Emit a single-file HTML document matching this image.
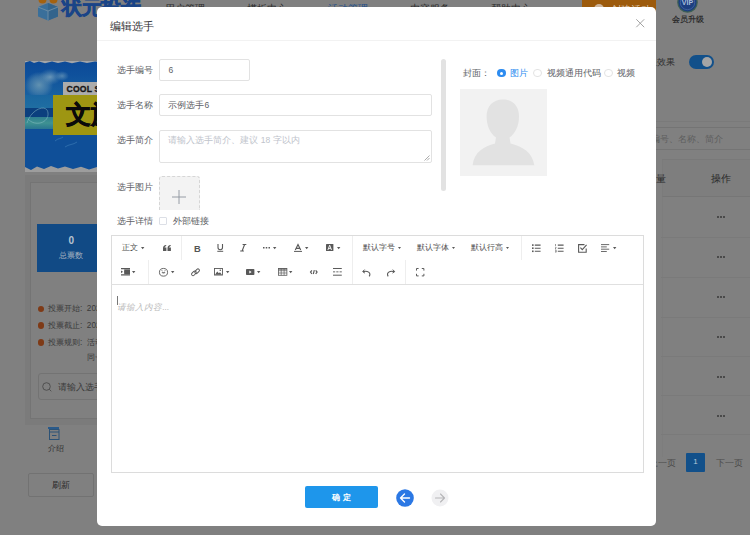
<!DOCTYPE html>
<html><head><meta charset="utf-8">
<style>
*{box-sizing:border-box;margin:0;padding:0}
html,body{width:750px;height:535px;overflow:hidden;background:#fff;font-family:"Liberation Sans",sans-serif;}
.a{position:absolute;white-space:nowrap}
#page{position:absolute;left:0;top:0;width:750px;height:535px;background:#808080}
#ov{position:absolute;left:0;top:0;width:750px;height:535px;background:rgba(0,0,0,0.5)}
#modal{position:absolute;left:97.4px;top:7.3px;width:558.3px;height:519.1px;background:#fff;border-radius:5px}
.lbl{position:absolute;font-size:8.5px;color:#606266;line-height:10px}
.inp{position:absolute;border:1px solid #e2e2e2;border-radius:2px;background:#fff}
.tb{position:absolute;font-size:8px;color:#595959;line-height:10px}
.car{position:absolute;width:0;height:0;border-left:2px solid transparent;border-right:2px solid transparent;border-top:2.5px solid #595959}
.sep{position:absolute;width:1px;background:#eee}
svg{position:absolute;overflow:visible}
</style></head><body>
<div id="page">
  <!-- header -->
  <svg style="left:37px;top:-3px" width="22" height="24" viewBox="0 0 22 24">
    <path d="M11 6 L21 10 L21 19.5 L11 23.5 L1 19.5 L1 10 Z" fill="#3a6f9a"/>
    <path d="M11 6 L21 10 L21 19.5 L11 23.5 Z" fill="#33648c"/>
    <path d="M11 14 L11 23.5 M1 10 L11 14 L21 10" stroke="#6f8ea6" stroke-width="0.9" fill="none"/>
    <circle cx="5.5" cy="2.5" r="4" fill="#a4620f"/><circle cx="16.5" cy="2.5" r="4" fill="#a4620f"/>
  </svg>
  <div class="a" style="left:62px;top:-4px;font-size:20px;line-height:22px;font-weight:700;color:#1a4487;letter-spacing:-0.5px;-webkit-text-stroke:0.7px #1a4487">状元投选</div>
  <div class="a" style="left:165px;top:4px;font-size:9.5px;line-height:9.5px;color:#2a2a2a">用户管理</div>
  <div class="a" style="left:247px;top:4px;font-size:9.5px;line-height:9.5px;color:#2a2a2a">模板中心</div>
  <div class="a" style="left:328px;top:4px;font-size:9.5px;line-height:9.5px;color:#1f4f8a">活动管理</div>
  <div class="a" style="left:410px;top:4px;font-size:9.5px;line-height:9.5px;color:#2a2a2a">内容服务</div>
  <div class="a" style="left:491px;top:4px;font-size:9.5px;line-height:9.5px;color:#2a2a2a">帮助中心</div>
  <div class="a" style="left:582px;top:-10px;width:74px;height:30px;background:#9c5a0c;border-radius:3px"></div>
  <div class="a" style="left:594px;top:4px;width:10px;height:10px;border-radius:50%;background:#cdb59c"></div>
  <div class="a" style="left:611px;top:4.5px;font-size:9.5px;line-height:9.5px;color:#dcc8b0">创建活动</div>
  <svg style="left:677px;top:-8.5px" width="21" height="21" viewBox="0 0 21 21"><circle cx="10.5" cy="10.5" r="10.3" fill="#3d5f55"/><circle cx="10.5" cy="10.5" r="9" fill="#1c3f80"/><circle cx="10.5" cy="10.5" r="7.2" fill="none" stroke="#5f7fb0" stroke-width="0.5"/><text x="10.5" y="13" font-size="7" fill="#a9bedc" text-anchor="middle" font-weight="bold" font-family="Liberation Sans">VIP</text></svg>
  <div class="a" style="left:672px;top:15px;font-size:8.3px;line-height:9px;color:#222;-webkit-text-stroke:0.15px #222">会员升级</div>

  <!-- banner -->
  <div class="a" style="left:25px;top:61px;width:80px;height:111px;overflow:hidden;background:#0e4d96">
    <div class="a" style="left:0;top:0;width:80px;height:36px;background:linear-gradient(#0c4a98 0%,#0f519c 40%,#1a62a0 100%)"></div>
    <div class="a" style="left:0;top:11px;width:28px;height:26px;background:radial-gradient(ellipse at 50% 50%,rgba(110,155,180,0.85) 0%,rgba(90,140,175,0.5) 45%,rgba(60,120,170,0) 72%)"></div>
    <div class="a" style="left:14px;top:8px;width:22px;height:16px;background:radial-gradient(ellipse at 50% 50%,rgba(125,165,190,0.8) 0%,rgba(90,140,175,0.3) 50%,rgba(60,120,170,0) 72%)"></div>
    <div class="a" style="left:30px;top:10px;width:14px;height:10px;background:radial-gradient(ellipse at 50% 50%,rgba(110,155,185,0.7) 0%,rgba(60,120,170,0) 70%)"></div>
    <div class="a" style="left:0;top:34px;width:80px;height:13px;background:linear-gradient(#1a66a0,#1f6ea2)"></div>
    <div class="a" style="left:0;top:47px;width:80px;height:9px;background:#0b3f7e"></div>
    <div class="a" style="left:0;top:56px;width:80px;height:12px;background:linear-gradient(#2f7f90,#3f9292 50%,#2a7690)"></div>
    <div class="a" style="left:0;top:68px;width:80px;height:40px;background:#0f4f98"></div>
    <svg style="left:0;top:0" width="80" height="111" viewBox="0 0 80 111">
      <path d="M0 1.5 L5 0 L9 2 L14 0.5 L20 2.2 L27 0.4 L33 2 L40 0.5 L47 2.2 L55 0.6 L62 2 L70 0.5 L80 1.8 L80 -2 L0 -2Z" fill="#a3a5a8"/>
      <path d="M0 106 L6 109 L12 105.5 L19 108 L26 105 L33 107.5 L40 105.5 L48 108 L56 105.8 L64 108.5 L72 106 L80 107.5 L80 112 L0 112Z" fill="#9d9d9d"/>
      <path d="M2 62 C6 48 22 42 23 52 C24 62 10 66 3 58" stroke="#8fc0c8" stroke-width="0.5" fill="none"/>
      <path d="M30 80 C33 77 36 78 38 76 M40 86 C44 83 48 84 52 81" stroke="#3f7fb8" stroke-width="0.6" fill="none"/>
    </svg>
    <div class="a" style="left:38px;top:21px;width:45px;height:12.5px;background:#acacac"></div>
    <div class="a" style="left:41.5px;top:22px;font-size:8.6px;line-height:12px;font-weight:bold;color:#151515;letter-spacing:0.2px;-webkit-text-stroke:0.3px #151515">COOL S</div>
    <div class="a" style="left:28px;top:34px;width:60px;height:40px;background:#9e9612"></div>
    <div class="a" style="left:41px;top:36px;font-size:25px;line-height:34px;font-weight:700;color:#0a0a0a;-webkit-text-stroke:0.6px #0a0a0a">文旅</div>
  </div>
  <!-- left panel -->
  <div class="a" style="left:25px;top:175px;width:80px;height:250px;background:#7b7b7b"></div>
  <div class="a" style="left:30px;top:182px;width:80px;height:237px;background:#808080;border:1px solid #747474"></div>
  <div class="a" style="left:37px;top:224px;width:70px;height:48px;background:#114a85"></div>
  <div class="a" style="left:68.5px;top:235px;font-size:10px;line-height:11px;color:#b8c4d0;font-weight:bold">0</div>
  <div class="a" style="left:59px;top:251px;font-size:8px;line-height:10px;color:#aab6c2">总票数</div>
  <div class="a" style="left:37.5px;top:305.5px;width:6.5px;height:6.5px;border-radius:50%;background:#7e3a16"></div>
  <div class="a" style="left:37.5px;top:322px;width:6.5px;height:6.5px;border-radius:50%;background:#7e3a16"></div>
  <div class="a" style="left:37.5px;top:339px;width:6.5px;height:6.5px;border-radius:50%;background:#7e3a16"></div>
  <div class="a" style="left:48px;top:304px;font-size:8.2px;line-height:10px;color:#3a3a3a">投票开始:&nbsp; 2023</div>
  <div class="a" style="left:48px;top:321px;font-size:8.2px;line-height:10px;color:#3a3a3a">投票截止:&nbsp; 2023</div>
  <div class="a" style="left:48px;top:338px;font-size:8.2px;line-height:10px;color:#3a3a3a">投票规则:&nbsp; 活动</div>
  <div class="a" style="left:87px;top:352.5px;font-size:8.2px;line-height:10px;color:#3a3a3a">同一</div>
  <div class="a" style="left:38px;top:373px;width:70px;height:27px;background:#808080;border:1px solid #737373;border-radius:3px"></div>
  <svg style="left:42px;top:382px" width="10" height="10" viewBox="0 0 10 10"><circle cx="4.5" cy="4.5" r="3.8" fill="none" stroke="#444" stroke-width="0.8"/><path d="M7.3 7.3L9.3 9.3" stroke="#444" stroke-width="0.8"/></svg>
  <div class="a" style="left:57.5px;top:382px;font-size:8.5px;line-height:10px;color:#3a3a3a">请输入选手</div>
  <div class="a" style="left:48px;top:427px;width:11px;height:1.5px;background:#2a5a8a"></div>
  <svg style="left:48.5px;top:429px" width="10.5" height="11" viewBox="0 0 10.5 11"><rect x="0.5" y="0.5" width="9.5" height="10" fill="none" stroke="#2c5276" stroke-width="1"/><path d="M0.5 3H10M3 6.5H7.5" stroke="#2c5276" stroke-width="1"/></svg>
  <div class="a" style="left:48px;top:443.5px;font-size:7.5px;line-height:9px;color:#303030">介绍</div>
  <div class="a" style="left:28px;top:473px;width:66px;height:24px;border:1px solid #727272;border-radius:2px;background:#808080"></div>
  <div class="a" style="left:52px;top:480px;font-size:8.5px;line-height:10px;color:#2a2a2a">刷新</div>

  <!-- right side -->
  <div class="a" style="left:648px;top:57px;font-size:8.5px;line-height:10px;color:#2e2e2e">显效果</div>
  <div class="a" style="left:689px;top:55px;width:25px;height:13.5px;border-radius:7px;background:#12508a"></div>
  <div class="a" style="left:701.5px;top:56.5px;width:10.5px;height:10.5px;border-radius:50%;background:#a5a5a5"></div>
  <div class="a" style="left:640px;top:121px;width:110px;height:1px;background:#7a7a7a"></div>
  <div class="a" style="left:620px;top:127px;width:140px;height:22.5px;border:1px solid #747474;background:#808080"></div>
  <div class="a" style="left:651px;top:134px;font-size:8.5px;line-height:10px;color:#5e5e5e">编号、名称、简介</div>
  <div class="a" style="left:662px;top:159px;width:100px;height:38px;background:#7e7e7e;border-top:1px solid #797979;border-left:1px solid #7b7b7b;border-bottom:1px solid #767676"></div><div class="a" style="left:662px;top:197px;width:1px;height:260px;background:#7d7d7d"></div>
  <div class="a" style="left:646px;top:173px;font-size:10px;line-height:11px;color:#2a2a2a">数量</div>
  <div class="a" style="left:711px;top:173px;font-size:10px;line-height:11px;color:#2a2a2a">操作</div>
  <div class="a" style="left:661px;top:237px;width:100px;height:1px;background:#7a7a7a"></div>
<div class="a" style="left:716.6px;top:215.7px;width:2px;height:2px;border-radius:50%;background:#383838"></div><div class="a" style="left:719.9px;top:215.7px;width:2px;height:2px;border-radius:50%;background:#383838"></div><div class="a" style="left:723.2px;top:215.7px;width:2px;height:2px;border-radius:50%;background:#383838"></div>
<div class="a" style="left:661px;top:277px;width:100px;height:1px;background:#7a7a7a"></div>
<div class="a" style="left:716.6px;top:255.7px;width:2px;height:2px;border-radius:50%;background:#383838"></div><div class="a" style="left:719.9px;top:255.7px;width:2px;height:2px;border-radius:50%;background:#383838"></div><div class="a" style="left:723.2px;top:255.7px;width:2px;height:2px;border-radius:50%;background:#383838"></div>
<div class="a" style="left:661px;top:316.5px;width:100px;height:1px;background:#7a7a7a"></div>
<div class="a" style="left:716.6px;top:295.7px;width:2px;height:2px;border-radius:50%;background:#383838"></div><div class="a" style="left:719.9px;top:295.7px;width:2px;height:2px;border-radius:50%;background:#383838"></div><div class="a" style="left:723.2px;top:295.7px;width:2px;height:2px;border-radius:50%;background:#383838"></div>
<div class="a" style="left:661px;top:356px;width:100px;height:1px;background:#7a7a7a"></div>
<div class="a" style="left:716.6px;top:335.7px;width:2px;height:2px;border-radius:50%;background:#383838"></div><div class="a" style="left:719.9px;top:335.7px;width:2px;height:2px;border-radius:50%;background:#383838"></div><div class="a" style="left:723.2px;top:335.7px;width:2px;height:2px;border-radius:50%;background:#383838"></div>
<div class="a" style="left:661px;top:395px;width:100px;height:1px;background:#7a7a7a"></div>
<div class="a" style="left:716.6px;top:375.7px;width:2px;height:2px;border-radius:50%;background:#383838"></div><div class="a" style="left:719.9px;top:375.7px;width:2px;height:2px;border-radius:50%;background:#383838"></div><div class="a" style="left:723.2px;top:375.7px;width:2px;height:2px;border-radius:50%;background:#383838"></div>
<div class="a" style="left:661px;top:434px;width:100px;height:1px;background:#7a7a7a"></div>
<div class="a" style="left:716.6px;top:414.7px;width:2px;height:2px;border-radius:50%;background:#383838"></div><div class="a" style="left:719.9px;top:414.7px;width:2px;height:2px;border-radius:50%;background:#383838"></div><div class="a" style="left:723.2px;top:414.7px;width:2px;height:2px;border-radius:50%;background:#383838"></div>

  <div class="a" style="left:649px;top:457.5px;font-size:8.5px;line-height:10px;color:#4a4a4a">上一页</div>
  <div class="a" style="left:686px;top:453px;width:19px;height:18.5px;background:#12508a;border-radius:1px;color:#b8c8d8;font-size:8px;line-height:18.5px;text-align:center">1</div>
  <div class="a" style="left:716px;top:457.5px;font-size:8.5px;line-height:10px;color:#4a4a4a">下一页</div>
</div>
<div id="modal">
  <div class="a" style="left:13px;top:12px;font-size:10.7px;color:#303133;line-height:14px">编辑选手</div>
  <svg style="left:538.5px;top:11.5px" width="8.5" height="8.5" viewBox="0 0 8.5 8.5"><path d="M0.3 0.3L8.2 8.2M8.2 0.3L0.3 8.2" stroke="#999" stroke-width="0.9"/></svg>
  <div class="a" style="left:0;top:33px;width:559px;height:1px;background:#f2f2f2"></div>

  <div class="lbl" style="left:20px;top:58px">选手编号</div>
  <div class="inp" style="left:62px;top:52px;width:91px;height:22px"></div>
  <div class="a" style="left:71px;top:58px;font-size:8.5px;color:#606266;line-height:10px">6</div>

  <div class="lbl" style="left:20px;top:93px">选手名称</div>
  <div class="inp" style="left:62px;top:87px;width:273px;height:22px"></div>
  <div class="a" style="left:71px;top:93px;font-size:8.5px;color:#606266;line-height:10px">示例选手6</div>

  <div class="lbl" style="left:20px;top:128px">选手简介</div>
  <div class="inp" style="left:62px;top:123px;width:273px;height:33px"></div>
  <div class="a" style="left:71px;top:128px;font-size:8.5px;color:#c0c4cc;line-height:10px">请输入选手简介、建议 18 字以内</div>
  <svg style="left:327px;top:148px" width="6" height="6" viewBox="0 0 6 6"><path d="M5.5 0.5L0.5 5.5M5.5 3L3 5.5" stroke="#888" stroke-width="0.7"/></svg>

  <div class="lbl" style="left:20px;top:175px">选手图片</div>
  <div class="a" style="left:62px;top:169px;width:41px;height:34px;border:1px dashed #d6d6d6;border-bottom:none;border-radius:3px 3px 0 0;background:#f3f3f3"></div>
  <svg style="left:75px;top:183px" width="14" height="14" viewBox="0 0 14 14"><path d="M7 0V14M0 7H14" stroke="#8c939d" stroke-width="0.9"/></svg>

  <div class="lbl" style="left:20px;top:209px">选手详情</div>
  <div class="a" style="left:62px;top:210px;width:8px;height:8px;border:1px solid #dcdfe6;border-radius:1px;background:#fff"></div>
  <div class="a" style="left:76px;top:209px;font-size:8.5px;color:#606266;line-height:10px">外部链接</div>

  <div class="a" style="left:344px;top:51.5px;width:4.5px;height:132px;border-radius:3px;background:#e2e2e2"></div>

  <div class="a" style="left:366px;top:61px;font-size:8.5px;color:#606266;line-height:10px">封面：</div>
  <div class="a" style="left:400px;top:61.5px;width:8.5px;height:8.5px;border-radius:50%;background:#2d8cf0"></div>
  <div class="a" style="left:402.75px;top:64.25px;width:3px;height:3px;border-radius:50%;background:#fff"></div>
  <div class="a" style="left:413px;top:61px;font-size:8.5px;color:#2d8cf0;line-height:10px">图片</div>
  <div class="a" style="left:436px;top:61.5px;width:8.5px;height:8.5px;border-radius:50%;border:1px solid #e3e3e3;background:#fff"></div>
  <div class="a" style="left:449.5px;top:61px;font-size:8.5px;color:#606266;line-height:10px">视频通用代码</div>
  <div class="a" style="left:507px;top:61.5px;width:8.5px;height:8.5px;border-radius:50%;border:1px solid #e3e3e3;background:#fff"></div>
  <div class="a" style="left:519.5px;top:61px;font-size:8.5px;color:#606266;line-height:10px">视频</div>

  <div class="a" style="left:363px;top:82px;width:87px;height:87px;background:#f2f2f2;overflow:hidden">
    <svg style="left:0;top:0" width="87" height="87" viewBox="0 0 87 87">
      <path d="M42.75 10.4 C52.5 10.4 59 17 59 27.5 C59 37 55 45 49.5 48.5 L50.5 54.5 C62 57.5 72.5 63 74.3 76.3 L12.6 76.3 C14 63 24 57.5 35 54.5 L36 48.5 C30.5 45 26.6 37 26.6 27.5 C26.6 17 33 10.4 42.75 10.4Z" fill="#e2e2e2"/>
    </svg>
  </div>

  <!-- editor -->
  <div class="a" style="left:13.5px;top:228px;width:533px;height:238px;border:1px solid #dcdcdc"></div>
  <div class="a" style="left:14px;top:276.5px;width:532px;height:1px;background:#e0e0e0"></div>
  <div class="a" style="left:-97px;top:-7px;width:750px;height:535px"><div class="a" style="left:121.5px;top:243px;font-size:8px;line-height:10px;color:#4d4d4d">正文</div>
<svg style="left:140.60px;top:246.30px" width="3.4" height="2.2" viewBox="0 0 3.4 2.2"><path d="M0 0H3.4L1.7 2.2Z" fill="#595959"/></svg>
<svg style="left:163px;top:244.8px" width="8" height="6" viewBox="0 0 8 6"><path d="M0 6V3.2C0 1.3 1 .3 3.2 0V1.1C2.2 1.4 1.7 2 1.6 2.6H3.4V6ZM4.5 6V3.2C4.5 1.3 5.5 .3 7.7 0V1.1C6.7 1.4 6.2 2 6.1 2.6H7.9V6Z" fill="#595959"/></svg>
<div class="a" style="left:181px;top:236px;width:1px;height:24px;background:#eeeeee"></div>
<div class="a" style="left:193.5px;top:243.5px;font-size:9.3px;line-height:10px;font-weight:bold;color:#555">B</div>
<svg style="left:217px;top:244px" width="6.5" height="8" viewBox="0 0 6.5 8"><path d="M1 0V3.6C1 5 2 5.8 3.25 5.8S5.5 5 5.5 3.6V0" stroke="#595959" stroke-width="1.1" fill="none"/><path d="M0.3 7.3H6.2" stroke="#595959" stroke-width="1"/></svg>
<svg style="left:239.7px;top:244px" width="6.5" height="7.5" viewBox="0 0 6.5 7.5"><path d="M2.6 .5H6.3M0.2 7H3.9M4.6 .5L2.1 7" stroke="#595959" stroke-width="1.1" fill="none"/></svg>
<svg style="left:262.6px;top:246.8px" width="7" height="1.6" viewBox="0 0 7 1.6"><rect x="0" y="0" width="1.5" height="1.5" fill="#595959"/><rect x="2.75" y="0" width="1.5" height="1.5" fill="#595959"/><rect x="5.5" y="0" width="1.5" height="1.5" fill="#595959"/></svg>
<svg style="left:273.10px;top:246.30px" width="3.4" height="2.2" viewBox="0 0 3.4 2.2"><path d="M0 0H3.4L1.7 2.2Z" fill="#595959"/></svg>
<svg style="left:294px;top:243.8px" width="8" height="8" viewBox="0 0 8 8"><path d="M1.3 6.1L4 0.5L6.7 6.1M2.3 4.3H5.7" stroke="#595959" stroke-width="1.15" fill="none"/><path d="M0 7.4H8" stroke="#595959" stroke-width="1"/></svg>
<svg style="left:304.70px;top:246.30px" width="3.4" height="2.2" viewBox="0 0 3.4 2.2"><path d="M0 0H3.4L1.7 2.2Z" fill="#595959"/></svg>
<svg style="left:325.8px;top:244px" width="7.4" height="7" viewBox="0 0 7.4 7"><rect width="7.4" height="7" rx="0.6" fill="#595959"/><path d="M1.9 6L3.7 1.2L5.5 6M2.6 4.4H4.8" stroke="#fff" stroke-width="0.9" fill="none"/></svg>
<svg style="left:336.30px;top:246.30px" width="3.4" height="2.2" viewBox="0 0 3.4 2.2"><path d="M0 0H3.4L1.7 2.2Z" fill="#595959"/></svg>
<div class="a" style="left:352px;top:236px;width:1px;height:48px;background:#eeeeee"></div>
<div class="a" style="left:363px;top:243px;font-size:8px;line-height:10px;color:#4d4d4d">默认字号</div>
<svg style="left:397.70px;top:246.5px" width="3" height="2" viewBox="0 0 3 2"><path d="M0 0H3L1.5 2Z" fill="#595959"/></svg>
<div class="a" style="left:417px;top:243px;font-size:8px;line-height:10px;color:#4d4d4d">默认字体</div>
<svg style="left:451.90px;top:246.5px" width="3" height="2" viewBox="0 0 3 2"><path d="M0 0H3L1.5 2Z" fill="#595959"/></svg>
<div class="a" style="left:470.6px;top:243px;font-size:8px;line-height:10px;color:#4d4d4d">默认行高</div>
<svg style="left:505.50px;top:246.5px" width="3" height="2" viewBox="0 0 3 2"><path d="M0 0H3L1.5 2Z" fill="#595959"/></svg>
<div class="a" style="left:520.5px;top:236px;width:1px;height:24px;background:#eeeeee"></div>
<svg style="left:531.5px;top:243.3px" width="8.6" height="8.4" viewBox="0 0 8.6 8.4"><rect x="0" y="0.3" width="1.6" height="1.6" fill="#595959"/><rect x="0" y="3.4" width="1.6" height="1.6" fill="#595959"/><rect x="0" y="6.5" width="1.6" height="1.6" fill="#595959"/><path d="M2.8 1.1H8.6M2.8 4.2H8.6M2.8 7.3H8.6" stroke="#595959" stroke-width="1.1"/></svg>
<svg style="left:555px;top:243.3px" width="8.6" height="8.4" viewBox="0 0 8.6 8.4"><path d="M0.5 0V2.2M0.2 3.4H1.2L0.2 5H1.2M0.2 6.2H1.2V8.2H0.2M0.2 7.2H1.2" stroke="#595959" stroke-width="0.6" fill="none"/><path d="M2.8 1.1H8.6M2.8 4.2H8.6M2.8 7.3H8.6" stroke="#595959" stroke-width="1.1"/></svg>
<svg style="left:577.8px;top:243.3px" width="9.2" height="8.8" viewBox="0 0 9.2 8.8"><path d="M6.5 0.6H0.6V8.2H8.2V4.5" stroke="#595959" stroke-width="1.1" fill="none"/><path d="M2.4 3.6L4.3 5.6L8.6 0.9" stroke="#595959" stroke-width="1.1" fill="none"/></svg>
<svg style="left:601px;top:243.5px" width="8.2" height="8" viewBox="0 0 8.2 8"><path d="M0 .6H8.2M0 2.9H5.8M0 5.2H8.2M0 7.5H5.8" stroke="#595959" stroke-width="0.9"/></svg>
<svg style="left:612.30px;top:246.30px" width="3.4" height="2.2" viewBox="0 0 3.4 2.2"><path d="M0 0H3.4L1.7 2.2Z" fill="#595959"/></svg>
<svg style="left:120.4px;top:268px" width="9" height="7.6" viewBox="0 0 9 7.6"><path d="M0 .7H9M3.2 3.8H9M0 6.9H9" stroke="#595959" stroke-width="1.3"/><path d="M0 2.4V5.2L2 3.8Z" fill="#595959"/><rect x="3.2" y="1.4" width="5.8" height="4.8" fill="#595959"/></svg>
<svg style="left:132.10px;top:270.80px" width="3.4" height="2.2" viewBox="0 0 3.4 2.2"><path d="M0 0H3.4L1.7 2.2Z" fill="#595959"/></svg>
<div class="a" style="left:148px;top:260px;width:1px;height:24px;background:#eeeeee"></div>
<svg style="left:159px;top:267.7px" width="9" height="8.6" viewBox="0 0 9 8.6"><ellipse cx="4.5" cy="4.3" rx="4.05" ry="3.85" stroke="#595959" stroke-width="0.9" fill="none"/><path d="M2.7 4.3H6.3C6.2 5.9 2.8 5.9 2.7 4.3Z" fill="#595959"/><path d="M2.4 2.2L3.6 3M6.6 2.2L5.4 3" stroke="#595959" stroke-width="0.8"/></svg>
<svg style="left:170.30px;top:270.80px" width="3.4" height="2.2" viewBox="0 0 3.4 2.2"><path d="M0 0H3.4L1.7 2.2Z" fill="#595959"/></svg>
<svg style="left:190.8px;top:267.6px" width="9" height="8.6" viewBox="0 0 9 8.6"><rect x="3.4" y="1.8" width="5.4" height="2.9" rx="1.45" transform="rotate(-45 6.1 3.25)" stroke="#595959" stroke-width="0.95" fill="none"/><rect x="0.2" y="3.9" width="5.4" height="2.9" rx="1.45" transform="rotate(-45 2.9 5.35)" stroke="#595959" stroke-width="0.95" fill="none"/></svg>
<svg style="left:214px;top:268.2px" width="8.9" height="7.5" viewBox="0 0 8.9 7.5"><rect x="0.45" y="0.45" width="8" height="6.6" stroke="#595959" stroke-width="0.9" fill="none"/><path d="M1 6.8L3.2 3.6L4.8 5.2L6 4.2L8 6.8Z" fill="#595959"/><circle cx="6.3" cy="2.2" r="0.8" fill="#595959"/></svg>
<svg style="left:225.30px;top:270.80px" width="3.4" height="2.2" viewBox="0 0 3.4 2.2"><path d="M0 0H3.4L1.7 2.2Z" fill="#595959"/></svg>
<svg style="left:246px;top:269px" width="8.4" height="6" viewBox="0 0 8.4 6"><rect width="8.4" height="6" rx="0.8" fill="#595959"/><path d="M3.3 1.6V4.4L5.6 3Z" fill="#fff"/></svg>
<svg style="left:256.80px;top:270.80px" width="3.4" height="2.2" viewBox="0 0 3.4 2.2"><path d="M0 0H3.4L1.7 2.2Z" fill="#595959"/></svg>
<svg style="left:277.2px;top:268.2px" width="9.3" height="7.7" viewBox="0 0 9.3 7.7"><rect x="0.4" y="0.4" width="8.5" height="6.9" stroke="#595959" stroke-width="0.8" fill="none"/><path d="M0.4 2.7H8.9M0.4 5H8.9M3.2 .4V7.3M6.1 .4V7.3" stroke="#595959" stroke-width="0.7"/><rect x="0.4" y="0.4" width="8.5" height="1.2" fill="#595959"/></svg>
<svg style="left:289.00px;top:270.80px" width="3.4" height="2.2" viewBox="0 0 3.4 2.2"><path d="M0 0H3.4L1.7 2.2Z" fill="#595959"/></svg>
<svg style="left:310px;top:270.2px" width="7.6" height="4.2" viewBox="0 0 7.6 4.2"><path d="M1.9 0.4L0.5 2.1L1.9 3.8M5.7 0.4L7.1 2.1L5.7 3.8M4.3 0.2L3.3 4" stroke="#595959" stroke-width="1.15" fill="none"/></svg>
<svg style="left:332.4px;top:268.2px" width="8.8" height="7.7" viewBox="0 0 8.8 7.7"><path d="M0 .5H8.8M0 7.2H8.8" stroke="#595959" stroke-width="1"/><path d="M0 3.85H2.2M3.3 3.85H5.5M6.6 3.85H8.8" stroke="#595959" stroke-width="0.9"/></svg>
<div class="a" style="left:351.5px;top:260px;width:1px;height:24px;background:#eeeeee"></div>
<svg style="left:362px;top:268.4px" width="9.4" height="7.8" viewBox="0 0 9.4 7.8"><path d="M2.6 0.6L0.7 2.6L2.9 4.1" stroke="#595959" stroke-width="1" fill="none"/><path d="M1 2.6C5.5 1.5 9.5 3.5 7.2 7.4" stroke="#595959" stroke-width="1.1" fill="none"/></svg>
<svg style="left:385.4px;top:268.4px" width="9.4" height="7.8" viewBox="0 0 9.4 7.8"><path d="M6.8 0.6L8.7 2.6L6.5 4.1" stroke="#595959" stroke-width="1" fill="none"/><path d="M8.4 2.6C3.9 1.5 -0.1 3.5 2.2 7.4" stroke="#595959" stroke-width="1.1" fill="none"/></svg>
<div class="a" style="left:404.5px;top:260px;width:1px;height:24px;background:#eeeeee"></div>
<svg style="left:415.8px;top:267.8px" width="8.4" height="8.4" viewBox="0 0 8.4 8.4"><path d="M0.5 2.6V0.5H2.6M5.8 0.5H7.9V2.6M7.9 5.8V7.9H5.8M2.6 7.9H0.5V5.8" stroke="#595959" stroke-width="1" fill="none"/></svg></div>
  <div class="a" style="left:19.5px;top:289px;width:1.2px;height:9px;background:#777"></div>
  <div class="a" style="left:20px;top:295px;font-size:8.5px;font-style:italic;color:#bbb;line-height:10px">请输入内容...</div>

  <div class="a" style="left:207.6px;top:478.7px;width:73px;height:22px;border-radius:2px;background:#1e96eb;color:#fff;font-size:8px;font-weight:bold;text-align:center;line-height:23px;letter-spacing:3.5px;text-indent:3.5px">确定</div>
  <svg style="left:298.5px;top:481.5px" width="18" height="18" viewBox="0 0 18 18"><circle cx="9" cy="9" r="8.8" fill="#2b78e4"/><path d="M13.5 9H4.5M8.5 5L4.5 9L8.5 13" stroke="#fff" stroke-width="1.4" fill="none" stroke-linecap="round" stroke-linejoin="round"/></svg>
  <svg style="left:334px;top:481.5px" width="18" height="18" viewBox="0 0 18 18"><circle cx="9" cy="9" r="8.5" fill="#f0f0f2"/><path d="M4.5 9H13.5M9.5 5L13.5 9L9.5 13" stroke="#b5b5b8" stroke-width="1.1" fill="none" stroke-linecap="round" stroke-linejoin="round"/></svg>
</div>
</body></html>
